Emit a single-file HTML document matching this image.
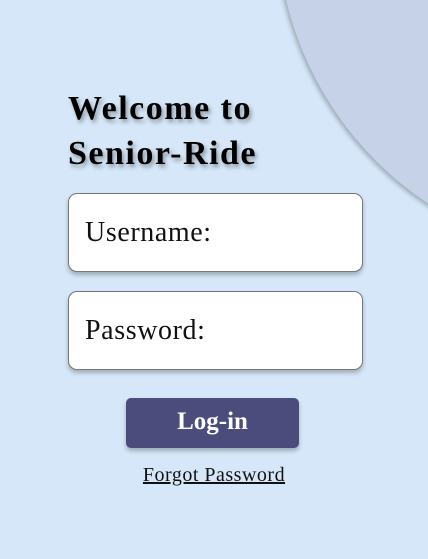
<!DOCTYPE html>
<html><head><style>
html,body{margin:0;padding:0}
body{width:428px;height:559px;background:#d5e7f8;position:relative;overflow:hidden;font-family:"Liberation Serif",serif}
.circ{position:absolute;left:277px;top:-416px;width:676px;height:676px;border-radius:50%;background:#c5d2e8;box-shadow:-2px 2px 4px rgba(0,0,0,0.25)}
h1{position:absolute;left:68px;top:86px;margin:0;font-size:34px;letter-spacing:1.5px;line-height:45px;font-weight:bold;color:#000;text-shadow:2px 3px 4px rgba(0,0,0,0.35)}
.box{position:absolute;left:68px;width:295px;height:79px;background:#fff;border:1px solid #777;border-radius:9px;box-sizing:border-box;box-shadow:0 3px 4px rgba(0,0,0,0.25);font-size:28px;letter-spacing:0.6px;line-height:77px;padding-left:16px;color:#111}
.btn{position:absolute;left:126px;top:398px;width:173px;height:50px;background:#4b4c7c;border-radius:5px;color:#fff;font-weight:bold;font-size:25px;text-align:center;line-height:48px;box-shadow:0 3px 4px rgba(0,0,0,0.25)}
.fp{position:absolute;left:0;width:428px;top:464px;text-align:center;font-size:20px;letter-spacing:0.5px;text-decoration:underline;color:#111}
</style></head><body>
<div class="circ"></div>
<h1>Welcome to<br>Senior-Ride</h1>
<div class="box" style="top:193px">Username:</div>
<div class="box" style="top:291px">Password:</div>
<div class="btn">Log-in</div>
<div class="fp">Forgot Password</div>
</body></html>
